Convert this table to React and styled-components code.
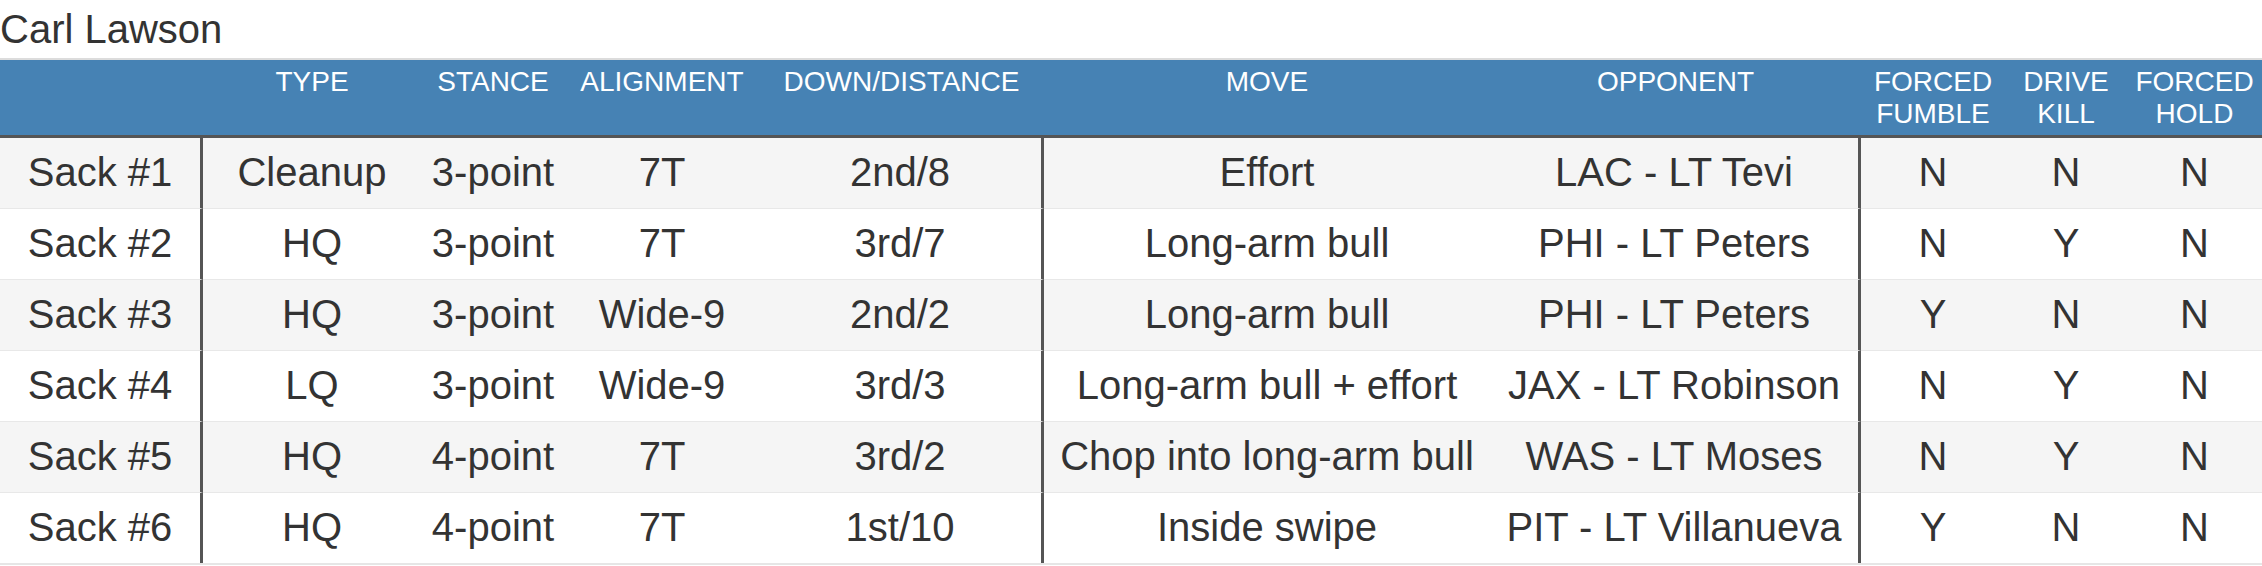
import React from "react";
import styled, { createGlobalStyle } from "styled-components";

const GlobalStyle = createGlobalStyle`
  body {
    margin: 0;
    background: #fff;
    color: #333;
    font-family: "Liberation Sans", Arial, Helvetica, sans-serif;
  }
`;

const Title = styled.h3`
  margin: 0;
  font-size: 40px;
  font-weight: 400;
  line-height: 58px;
`;

const Table = styled.table`
  width: 2262px;
  table-layout: fixed;
  border-collapse: separate;
  border-spacing: 0;
  border-top: 2px solid #dcdcdc;
  border-bottom: 2px solid #e6e6e6;
`;

const Col = styled.col`
  width: ${(p) => p.$w}px;
`;

const HeadCell = styled.th`
  padding: 6px 4px;
  background: #4682b4;
  color: #fff;
  font-size: 28px;
  font-weight: 400;
  line-height: 31.5px;
  text-align: center;
  vertical-align: top;
  white-space: pre-line;
  border-bottom: 3px solid #555;
`;

const Cell = styled.td`
  padding: 7px 4px 9px;
  background: ${(p) => (p.$striped ? "#f5f5f5" : "#fff")};
  font-size: 40px;
  line-height: 54px;
  text-align: center;
  white-space: nowrap;
  border-top: ${(p) => (p.$first ? "0" : "1px solid #e8e8e8")};
  border-right: ${(p) => (p.$divider ? "3px solid #555" : "0")};
`;

const columns = [
  { label: "", width: 203, divider: true },
  { label: "TYPE", width: 218 },
  { label: "STANCE", width: 144 },
  { label: "ALIGNMENT", width: 194 },
  { label: "DOWN/DISTANCE", width: 285, divider: true },
  { label: "MOVE", width: 446 },
  { label: "OPPONENT", width: 371, divider: true },
  { label: "FORCED\nFUMBLE", width: 144 },
  { label: "DRIVE\nKILL", width: 122 },
  { label: "FORCED\nHOLD", width: 135 },
];

const sacks = [
  ["Sack #1", "Cleanup", "3-point", "7T", "2nd/8", "Effort", "LAC - LT Tevi", "N", "N", "N"],
  ["Sack #2", "HQ", "3-point", "7T", "3rd/7", "Long-arm bull", "PHI - LT Peters", "N", "Y", "N"],
  ["Sack #3", "HQ", "3-point", "Wide-9", "2nd/2", "Long-arm bull", "PHI - LT Peters", "Y", "N", "N"],
  ["Sack #4", "LQ", "3-point", "Wide-9", "3rd/3", "Long-arm bull + effort", "JAX - LT Robinson", "N", "Y", "N"],
  ["Sack #5", "HQ", "4-point", "7T", "3rd/2", "Chop into long-arm bull", "WAS - LT Moses", "N", "Y", "N"],
  ["Sack #6", "HQ", "4-point", "7T", "1st/10", "Inside swipe", "PIT - LT Villanueva", "Y", "N", "N"],
];

export default function App() {
  return (
    <>
      <GlobalStyle />
      <Title>Carl Lawson</Title>
      <Table>
        <colgroup>
          {columns.map((c, i) => (
            <Col key={i} $w={c.width} />
          ))}
        </colgroup>
        <thead>
          <tr>
            {columns.map((c, i) => (
              <HeadCell key={i}>{c.label}</HeadCell>
            ))}
          </tr>
        </thead>
        <tbody>
          {sacks.map((row, r) => (
            <tr key={r}>
              {row.map((value, i) => (
                <Cell
                  key={i}
                  $first={r === 0}
                  $striped={r % 2 === 0}
                  $divider={columns[i].divider}
                >
                  {value}
                </Cell>
              ))}
            </tr>
          ))}
        </tbody>
      </Table>
    </>
  );
}
